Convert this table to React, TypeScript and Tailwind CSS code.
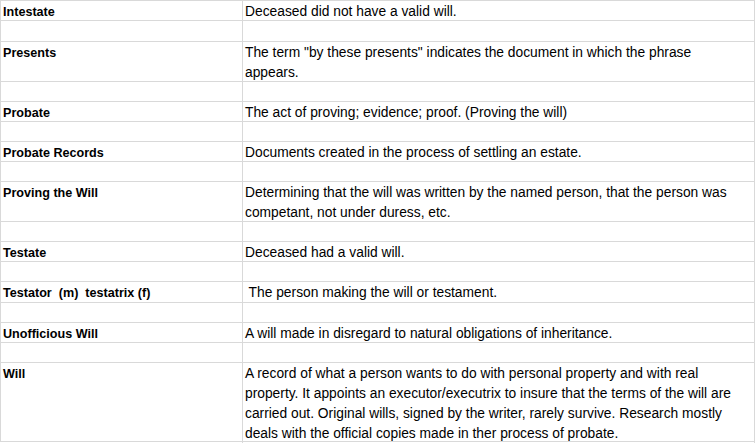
const rows: { term?: string; lines?: string[]; h: number }[] = [
  { term: 'Intestate', lines: ['Deceased did not have a valid will.'], h: 20 },
  { h: 21 },
  {
    term: 'Presents',
    lines: ['The term "by these presents" indicates the document in which the phrase', 'appears.'],
    h: 40,
  },
  { h: 20 },
  { term: 'Probate', lines: ['The act of proving; evidence; proof. (Proving the will)'], h: 20 },
  { h: 20 },
  { term: 'Probate Records', lines: ['Documents created in the process of settling an estate.'], h: 20 },
  { h: 20 },
  {
    term: 'Proving the Will',
    lines: [
      'Determining that the will was written by the named person, that the person was',
      'competant, not under duress, etc.',
    ],
    h: 40,
  },
  { h: 20 },
  { term: 'Testate', lines: ['Deceased had a valid will.'], h: 20 },
  { h: 20 },
  { term: 'Testator  (m)  testatrix (f)', lines: [' The person making the will or testament.'], h: 21 },
  { h: 20 },
  { term: 'Unofficious Will', lines: ['A will made in disregard to natural obligations of inheritance.'], h: 20 },
  { h: 20 },
  {
    term: 'Will',
    lines: [
      'A record of what a person wants to do with personal property and with real',
      'property. It appoints an executor/executrix to insure that the terms of the will are',
      'carried out. Original wills, signed by the writer, rarely survive. Research mostly',
      'deals with the official copies made in ther process of probate.',
    ],
    h: 79,
  },
]

export default function App() {
  return (
    <div className="w-[755px] h-[443px] bg-white overflow-hidden" style={{ fontFamily: '"Liberation Sans", Arial, sans-serif' }}>
      <div className="w-[755px] border-t border-l border-[#d9d9d9]">
        {rows.map((r, i) => (
          <div
            key={i}
            className="grid grid-cols-[242px_512px] border-b border-[#d9d9d9] box-border"
            style={{ height: r.h }}
          >
            {/* term */}
            <div className="border-r border-[#d9d9d9] pl-[2px] pt-[1px] text-[12.6px] leading-[20px] font-bold text-black whitespace-pre">
              {r.term}
            </div>
            {/* definition */}
            <div className="border-r border-[#d9d9d9] pl-[2px] pt-[1px] text-[13.8px] leading-[20px] text-black">
              {r.lines?.map((l, j) => (
                <div key={j} className="whitespace-pre">
                  {l}
                </div>
              ))}
            </div>
          </div>
        ))}
      </div>
    </div>
  )
}
